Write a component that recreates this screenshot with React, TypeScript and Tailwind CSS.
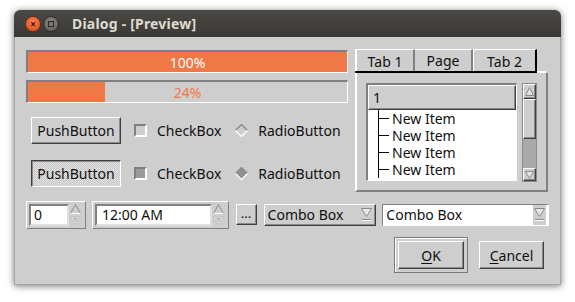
import React from "react";

const raised = "border border-t-white border-l-white border-r-[#3f3f3f] border-b-[#3f3f3f] shadow-[inset_-1px_-1px_0_#8a8a8a]";
const sunken = "border-2 border-t-[#808080] border-l-[#808080] border-r-white border-b-white";

function Diamond({ filled }: { filled: boolean }) {
  return (
    <svg width="13" height="13" viewBox="0 0 13 13">
      <polygon points="6.5,0.5 12.5,6.5 6.5,12.5 0.5,6.5" fill={filled ? "#8f8f8f" : "#cecece"} />
      <polyline points="0.5,6.5 6.5,0.5 12.5,6.5" fill="none" stroke="#8a8a8a" strokeWidth="1.4" />
      <polyline points="0.5,6.5 6.5,12.5 12.5,6.5" fill="none" stroke="#ffffff" strokeWidth="1.4" />
    </svg>
  );
}

function Check({ filled }: { filled: boolean }) {
  return (
    <div
      className={`w-[13px] h-[13px] border-2 border-t-[#808080] border-l-[#808080] border-r-white border-b-white ${
        filled ? "bg-[#9a9a9a]" : "bg-[#cecece]"
      }`}
    />
  );
}

function SpinArrows() {
  return (
    <div className="flex flex-col items-center justify-center w-[14px] gap-[2px]">
      <svg width="11" height="10" viewBox="0 0 11 10">
        <polygon points="5.5,0.5 10.5,9.5 0.5,9.5" fill="#cecece" stroke="#8a8a8a" />
        <line x1="0.5" y1="9.5" x2="10.5" y2="9.5" stroke="#ffffff" />
      </svg>
      <svg width="11" height="9" viewBox="0 0 11 9">
        <polygon points="0.5,0.5 10.5,0.5 5.5,8.5" fill="#e6e6e6" stroke="#b0b0b0" strokeDasharray="1 1" />
        <polygon points="2.5,1.5 8.5,1.5 5.5,6.5" fill="#bcbcbc" />
      </svg>
    </div>
  );
}

function ComboArrow() {
  return (
    <svg width="11" height="13" viewBox="0 0 11 13">
      <polygon points="0.5,0.5 10.5,0.5 5.5,8.5" fill="#e8e8e8" stroke="#8a8a8a" />
      <line x1="1" y1="11.5" x2="10" y2="11.5" stroke="#8a8a8a" />
      <line x1="1" y1="12.5" x2="10" y2="12.5" stroke="#ffffff" />
    </svg>
  );
}

function Progress({ value }: { value: number }) {
  const full = value === 100;
  return (
    <div className={`relative h-[23px] bg-[#cecece] ${sunken} border-b-[1px] border-r-[1px]`}>
      <div className="h-full bg-[#f07746]" style={{ width: `${value}%` }} />
      <div
        className={`absolute inset-0 flex items-center justify-center text-[14px] ${
          full ? "text-white" : "text-[#f07746]"
        }`}
      >
        {value}%
      </div>
    </div>
  );
}

export default function App() {
  const items = ["New Item", "New Item", "New Item", "New Item"];
  return (
    <div className="w-[575px] h-[302px] bg-white overflow-hidden font-['Noto_Sans',sans-serif] text-[#101010]">
      <div className="ml-[14px] mt-[10px] w-[547px] rounded-t-[6px] shadow-[0_1px_7px_rgba(0,0,0,0.55)]">
        <div className="h-[27px] rounded-t-[6px] bg-gradient-to-b from-[#4a4944] to-[#3a3935] flex items-center pl-[11px]">
          <div className="w-[16px] h-[16px] rounded-full bg-[radial-gradient(circle_at_50%_35%,#f6834f,#d8481b)] border border-[#7a2d10] flex items-center justify-center text-[#3a1205] text-[10px] leading-none font-bold">
            ×
          </div>
          <div className="ml-[2px] w-[16px] h-[16px] rounded-full bg-[radial-gradient(circle_at_50%_35%,#86857f,#5a5954)] border border-[#2d2c29] flex items-center justify-center">
            <div className="w-[6px] h-[6px] border border-[#2a2926] bg-[#77766f]" />
          </div>
          <span className="ml-[13px] text-[14px] font-bold text-[#dfdbd2] tracking-[0.2px]">Dialog - [Preview]</span>
        </div>
        <div className="h-[248px] bg-[#cecece] border-l border-r border-b border-[#a5a5a5] pl-[11px] pr-[11px] pt-[13px]">
          <div className="flex">
            <div className="w-[322px]">
              <Progress value={100} />
              <div className="mt-[7px]">
                <Progress value={24} />
              </div>
              <div className="mt-[14px] h-[27px] flex items-center">
                <div className={`h-[27px] w-[90px] ml-[5px] flex items-center justify-center text-[14px] bg-[#cecece] ${raised}`}>
                  PushButton
                </div>
                <div className="ml-[13px]"><Check filled={false} /></div>
                <span className="ml-[10px] text-[14px]">CheckBox</span>
                <div className="ml-[14px]"><Diamond filled={false} /></div>
                <span className="ml-[10px] text-[14px]">RadioButton</span>
              </div>
              <div className="mt-[16px] h-[27px] flex items-center">
                <div className="h-[27px] w-[90px] ml-[5px] flex items-center justify-center text-[14px] border border-t-[#3f3f3f] border-l-[#3f3f3f] border-r-white border-b-white shadow-[inset_1px_1px_0_#8a8a8a] bg-[repeating-conic-gradient(#c4c4c4_0_25%,#e4e4e4_0_50%)] bg-[length:2px_2px]">
                  PushButton
                </div>
                <div className="ml-[13px]"><Check filled={true} /></div>
                <span className="ml-[10px] text-[14px]">CheckBox</span>
                <div className="ml-[14px]"><Diamond filled={true} /></div>
                <span className="ml-[10px] text-[14px]">RadioButton</span>
              </div>
            </div>
            <div className="ml-[7px] w-[193px] -mt-[1px]">
              <div className="flex h-[24px] w-[182px] border-b-2 border-black text-[14px]">
                <div className="w-[60px] flex items-center justify-center border-t border-l-2 border-white border-r-2 border-r-[#808080] pt-[1px]">Tab 1</div>
                <div className="w-[58px] flex items-center justify-center border-t border-white border-r-2 border-r-[#808080]">Page</div>
                <div className="w-[64px] flex items-center justify-center border-t border-l border-white border-r-2 border-r-black pt-[1px]">Tab 2</div>
              </div>
              <div className="relative h-[119px] border-l-2 border-white border-r-2 border-r-[#808080] border-b-2 border-b-[#808080] flex pl-[9px] pt-[10px]">
                <div className="absolute -top-[2px] left-[180px] right-0 h-[2px] bg-white" />
                <div className={`w-[151px] h-[98px] bg-white ${sunken} border-r-[1px] border-b-[1px] overflow-hidden`}>
                  <div className={`h-[25px] bg-[#cecece] flex items-center pl-[4px] text-[14px] ${raised}`}>1</div>
                  <div className="relative">
                    <div className="absolute left-[10px] top-0 bottom-0 w-[1px] bg-black" />
                    {items.map((it, i) => (
                      <div key={i} className="h-[17px] flex items-center text-[14px] leading-none">
                        <div className="ml-[10px] w-[11px] h-[1px] bg-black" />
                        <span className="ml-[3px]">{it}</span>
                      </div>
                    ))}
                  </div>
                </div>
                <div className="ml-[5px] w-[15px] h-[99px] flex flex-col border border-[#8a8a8a] bg-[#a9a9a9]">
                  <div className={`h-[15px] bg-[#cecece] ${raised} flex items-center justify-center`}>
                    <svg width="9" height="9" viewBox="0 0 9 9">
                      <polygon points="4.5,0.5 8.5,8.5 0.5,8.5" fill="#e4e4e4" stroke="#8a8a8a" />
                    </svg>
                  </div>
                  <div className={`h-[40px] bg-[#cecece] ${raised}`} />
                  <div className="flex-1" />
                  <div className={`h-[13px] bg-[#cecece] ${raised} flex items-center justify-center`}>
                    <svg width="9" height="8" viewBox="0 0 9 8">
                      <polygon points="0.5,0.5 8.5,0.5 4.5,7.5" fill="#e4e4e4" stroke="#8a8a8a" />
                    </svg>
                  </div>
                </div>
              </div>
            </div>
          </div>
          <div className="mt-[8px] flex items-center h-[29px]">
            <div className="w-[60px] h-[28px] flex border border-t-white border-l-white border-r-[#808080] border-b-[#808080] p-[2px] bg-[#cecece]">
              <div className="flex-1 bg-white border-2 border-t-[#808080] border-l-[#808080] border-r-[#e0e0e0] border-b-[#e0e0e0] flex items-center pl-[3px] text-[14px]">0</div>
              <SpinArrows />
            </div>
            <div className="ml-[6px] w-[137px] h-[28px] flex border border-t-white border-l-white border-r-[#808080] border-b-[#808080] p-[2px] bg-[#cecece]">
              <div className="flex-1 bg-white border-2 border-t-[#808080] border-l-[#808080] border-r-[#e0e0e0] border-b-[#e0e0e0] flex items-center pl-[5px] text-[14px]">12:00 AM</div>
              <SpinArrows />
            </div>
            <div className={`ml-[7px] w-[21px] h-[21px] flex items-center justify-center text-[13px] leading-none pb-[3px] ${raised}`}>...</div>
            <div className={`ml-[7px] w-[113px] h-[22px] flex items-center justify-between pl-[3px] pr-[3px] text-[14px] ${raised}`}>
              <span>Combo Box</span>
              <ComboArrow />
            </div>
            <div className="ml-[6px] w-[167px] h-[22px] flex items-center justify-between border border-t-[#808080] border-l-[#808080] border-r-white border-b-white bg-white pl-[3px] pr-[2px] text-[14px]">
              <span>Combo Box</span>
              <div className="h-full flex items-center bg-[#cecece] px-[1px]"><ComboArrow /></div>
            </div>
          </div>
          <div className="mt-[8px] flex justify-end pr-[5px]">
            <div className="w-[74px] h-[36px] border border-[#7a7a7a] shadow-[inset_1px_1px_0_#ffffff] p-[3px]">
              <div className={`w-full h-full flex items-center justify-center text-[14px] ${raised}`}>
                <span><span className="underline underline-offset-2">O</span>K</span>
              </div>
            </div>
            <div className={`ml-[11px] mt-[4px] w-[65px] h-[28px] flex items-center justify-center text-[14px] ${raised}`}>
              <span><span className="underline underline-offset-2">C</span>ancel</span>
            </div>
          </div>
        </div>
      </div>
    </div>
  );
}
